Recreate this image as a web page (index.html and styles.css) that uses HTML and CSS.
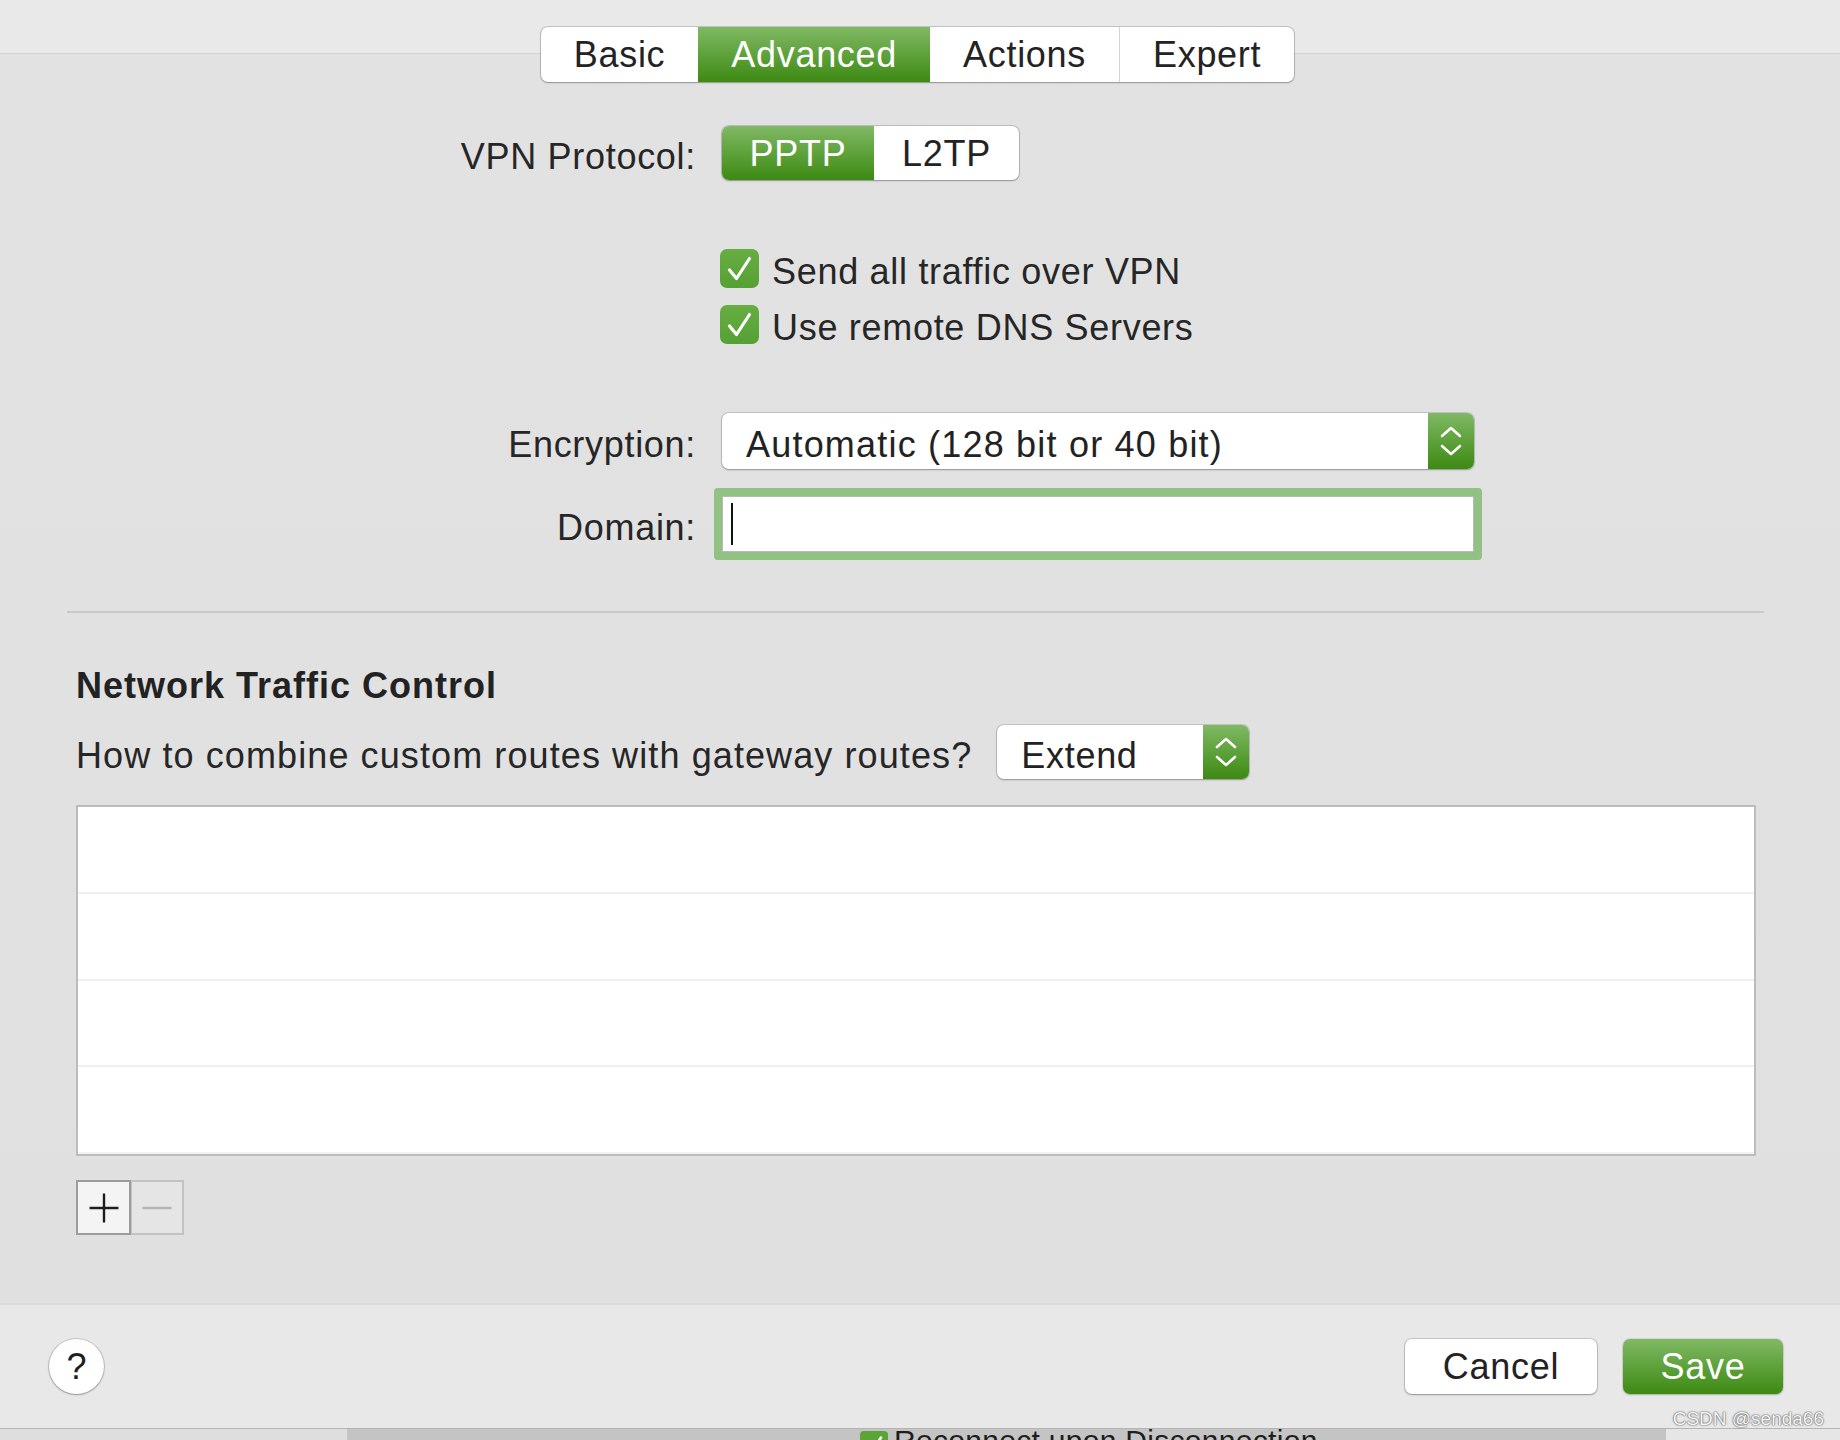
FILE: index.html
```html
<!DOCTYPE html>
<html>
<head>
<meta charset="utf-8">
<title>VPN Advanced</title>
<link rel="stylesheet" href="styles.css">
</head>
<body>
<div class="dialog">
  <main class="content">
    <div class="tabbar">
      <div class="seg tabs">
        <span class="seg-item">Basic</span>
        <span class="seg-item active">Advanced</span>
        <span class="seg-item">Actions</span>
        <span class="seg-item sep">Expert</span>
      </div>
    </div>

    <div class="row protocol">
      <span class="lbl">VPN Protocol:</span>
      <div class="seg proto">
        <span class="seg-item active">PPTP</span>
        <span class="seg-item">L2TP</span>
      </div>
    </div>

    <div class="row checks">
      <span class="lbl"></span>
      <div class="check-list">
        <div class="check">
          <span class="box"><svg width="39" height="39" viewBox="0 0 39 39"><path d="M9.5 21 L16.5 29.5 L29.5 9.5" fill="none" stroke="#fff" stroke-width="3.2" stroke-linecap="round" stroke-linejoin="round"/></svg></span>
          <span class="check-text">Send all traffic over VPN</span>
        </div>
        <div class="check">
          <span class="box"><svg width="39" height="39" viewBox="0 0 39 39"><path d="M9.5 21 L16.5 29.5 L29.5 9.5" fill="none" stroke="#fff" stroke-width="3.2" stroke-linecap="round" stroke-linejoin="round"/></svg></span>
          <span class="check-text">Use remote DNS Servers</span>
        </div>
      </div>
    </div>

    <div class="row enc">
      <span class="lbl">Encryption:</span>
      <div class="popup popup-enc">
        <span class="popup-text">Automatic (128 bit or 40 bit)</span>
        <span class="stepper"><svg width="46" height="56" viewBox="0 0 46 56"><path d="M14 23 L23 15 L32 23 M14 33 L23 41 L32 33" fill="none" stroke="#fff" stroke-width="2.6" stroke-linecap="round" stroke-linejoin="round"/></svg></span>
      </div>
    </div>

    <div class="row domain">
      <span class="lbl">Domain:</span>
      <div class="field"><span class="caret"></span></div>
    </div>

    <div class="divider"></div>

    <section class="ntc">
      <h2 class="ntc-title">Network Traffic Control</h2>
      <div class="combine">
        <span class="combine-text">How to combine custom routes with gateway routes?</span>
        <div class="popup popup-ext">
          <span class="popup-text">Extend</span>
          <span class="stepper"><svg width="46" height="54" viewBox="0 0 46 54"><path d="M14 22 L23 14 L32 22 M14 32 L23 40 L32 32" fill="none" stroke="#fff" stroke-width="2.6" stroke-linecap="round" stroke-linejoin="round"/></svg></span>
        </div>
      </div>
      <div class="routes">
        <div class="route-row"></div>
        <div class="route-row"></div>
        <div class="route-row"></div>
        <div class="route-row"></div>
      </div>
      <div class="addrem">
        <span class="ar-btn add"><svg width="32" height="32" viewBox="0 0 32 32"><path d="M16 1.5 V30.5 M1.5 16 H30.5" stroke="#1e1e1e" stroke-width="2.4" fill="none"/></svg></span>
        <span class="ar-btn remove"><svg width="32" height="32" viewBox="0 0 32 32"><path d="M1.5 16 H30.5" stroke="#b4b4b4" stroke-width="2.4" fill="none"/></svg></span>
      </div>
    </section>
  </main>

  <footer class="footer">
    <span class="help">?</span>
    <div class="actions">
      <span class="btn cancel">Cancel</span>
      <span class="btn save">Save</span>
    </div>
  </footer>

  <div class="behind">
    <div class="behind-left"></div>
    <div class="behind-mid">
      <span class="mini-box"><svg width="28" height="28" viewBox="0 0 28 28"><path d="M6.5 15 L11.5 21 L21 6.5" fill="none" stroke="#fff" stroke-width="2.6" stroke-linecap="round" stroke-linejoin="round"/></svg></span>
      <span class="behind-text">Reconnect upon Disconnection</span>
    </div>
    <div class="behind-right"></div>
  </div>

  <div class="watermark">CSDN @senda66</div>
</div>
</body>
</html>
```

FILE: styles.css
```css
* { box-sizing: border-box; }

html, body {
  margin: 0;
  padding: 0;
}

body {
  width: 1840px;
  height: 1440px;
  overflow: hidden;
  font-family: "Liberation Sans", Arial, sans-serif;
  font-size: 36px;
  letter-spacing: 0.7px;
  color: #262626;
}

.dialog {
  position: relative;
  width: 1840px;
  height: 1440px;
  display: flex;
  flex-direction: column;
}

.content {
  flex: 1;
  overflow: hidden;
  background: linear-gradient(#e9e9e9 0, #e9e9e9 53px, #d2d2d2 53px, #d2d2d2 54px, #e2e2e2 54px, #e0e0e0 100%);
}

/* segmented controls */
.tabbar {
  padding-top: 27px;
  padding-right: 5px;
  display: flex;
  justify-content: center;
}

.seg {
  display: inline-flex;
  background: #fff;
  border-radius: 7px;
  box-shadow: 0 0 0 1px rgba(0, 0, 0, 0.16), 0 1px 2px rgba(0, 0, 0, 0.22);
  overflow: hidden;
}

.tabs { height: 55px; }

.seg-item {
  display: flex;
  align-items: center;
  justify-content: center;
  padding: 0 33px;
  color: #232323;
}

.seg-item.sep { border-left: 1px solid #d4d4d4; }

.seg-item.active {
  color: #fff;
  background: linear-gradient(#80b964, #3d8a13);
}

.proto { height: 54px; }
.proto .seg-item { padding: 2px 20px 0; }
.proto .seg-item:first-child { width: 152px; }
.proto .seg-item:last-child { width: 145px; }

/* form rows */
.row {
  display: flex;
  align-items: center;
}

.lbl {
  width: 696px;
  margin-right: 26px;
  padding-top: 7px;
  text-align: right;
  flex: none;
}

.protocol { margin-top: 44px; }

.checks { margin-top: 69px; align-items: flex-start; }

.check-list {
  display: flex;
  flex-direction: column;
  gap: 17px;
  margin-left: -2px;
}

.check {
  display: flex;
  align-items: center;
  height: 39px;
}

.check-text { padding-top: 7px; }

.box {
  width: 39px;
  height: 39px;
  border-radius: 7px;
  background: linear-gradient(#66ad42, #56a133);
  margin-right: 13px;
  flex: none;
  display: block;
}

.box svg { display: block; }

.enc { margin-top: 69px; }

.popup {
  display: flex;
  align-items: center;
  background: #fff;
  border-radius: 7px;
  box-shadow: 0 0 0 1px rgba(0, 0, 0, 0.13), 0 1px 2px rgba(0, 0, 0, 0.25);
  overflow: hidden;
}

.popup-text {
  flex: 1;
  padding-left: 24px;
  padding-top: 7px;
  color: #222;
}

.popup-enc .popup-text { letter-spacing: 1.2px; }

.stepper {
  width: 46px;
  align-self: stretch;
  background: linear-gradient(#80b964, #3d8a13);
  display: flex;
  align-items: center;
  justify-content: center;
}

.stepper svg { display: block; }

.popup-enc {
  width: 752px;
  height: 56px;
}

.domain { margin-top: 27px; }

.field {
  width: 752px;
  height: 56px;
  background: #fff;
  border: 1px solid #b9b9b9;
  border-radius: 1px;
  box-shadow: 0 0 0 8px #92c283;
  display: flex;
  align-items: center;
  padding-left: 8px;
}

.caret {
  width: 2px;
  height: 42px;
  background: #111;
}

.divider {
  height: 2px;
  background: #c9c9c9;
  margin: 59px 76px 0 67px;
}

/* network traffic control */
.ntc {
  padding: 0 84px 0 76px;
}

.ntc-title {
  margin: 51px 0 0;
  padding-top: 2px;
  font-size: 36px;
  line-height: 40px;
  font-weight: bold;
  letter-spacing: 1px;
  color: #222;
}

.combine {
  margin-top: 19px;
  display: flex;
  align-items: center;
}

.combine-text {
  letter-spacing: 1.1px;
  margin-right: 25px;
  padding-top: 7px;
}

.popup-ext {
  width: 252px;
  height: 54px;
}

.routes {
  margin-top: 26px;
  height: 351px;
  background: #fff;
  border: 2px solid #bcbcbc;
  display: flex;
  flex-direction: column;
}

.route-row {
  flex: 1;
  border-bottom: 2px solid #efefef;
}

.route-row:last-child { border-bottom-color: #f3f3f3; }

.addrem {
  margin-top: 24px;
  display: flex;
  height: 55px;
}

.ar-btn {
  width: 55px;
  height: 55px;
  display: flex;
  align-items: center;
  justify-content: center;
}

.ar-btn.add {
  background: #f4f4f4;
  border: 2px solid #9c9c9c;
  position: relative;
  z-index: 1;
}

.ar-btn.remove {
  width: 54px;
  margin-left: -1px;
  background: #e5e5e5;
  border: 2px solid #c3c3c3;
}

/* footer */
.footer {
  height: 126px;
  flex: none;
  background: #e8e8e8;
  border-top: 2px solid #dbdbdb;
  border-bottom: 1px solid #b4b4b4;
  display: flex;
  align-items: center;
  justify-content: space-between;
  padding: 0 57px 0 49px;
}

.help {
  width: 55px;
  height: 55px;
  border-radius: 50%;
  background: #fff;
  box-shadow: 0 0 0 1px rgba(0, 0, 0, 0.14), 0 1px 2px rgba(0, 0, 0, 0.25);
  display: flex;
  align-items: center;
  justify-content: center;
  font-size: 36px;
  letter-spacing: 0;
  color: #1e1e1e;
}

.actions {
  display: flex;
  gap: 26px;
}

.btn {
  height: 55px;
  border-radius: 7px;
  display: flex;
  align-items: center;
  justify-content: center;
}

.cancel {
  width: 192px;
  background: #fff;
  box-shadow: 0 0 0 1px rgba(0, 0, 0, 0.14), 0 1px 2px rgba(0, 0, 0, 0.25);
  color: #222;
}

.save {
  width: 160px;
  background: linear-gradient(#80b964, #3d8a13);
  box-shadow: 0 0 0 1px rgba(0, 0, 0, 0.08), 0 1px 2px rgba(0, 0, 0, 0.2);
  color: #fff;
}

/* window behind the sheet */
.behind {
  height: 11px;
  flex: none;
  display: flex;
  overflow: hidden;
}

.behind-left { width: 347px; background: #dedede; }
.behind-right { flex: 1; background: #e6e6e6; }

.behind-mid {
  width: 1319px;
  background: #c4c4c4;
  display: flex;
  align-items: flex-start;
  padding-left: 513px;
}

.mini-box {
  width: 28px;
  height: 28px;
  margin-top: 2px;
  border-radius: 4px;
  background: #5aa535;
  flex: none;
  display: block;
}

.mini-box svg { display: block; }

.behind-text {
  margin-left: 6px;
  font-size: 30px;
  line-height: 30px;
  letter-spacing: 0.3px;
  color: #1e1e1e;
  margin-top: -3px;
}

.watermark {
  position: absolute;
  right: 16px;
  top: 1408px;
  font-size: 19px;
  letter-spacing: 0;
  color: #f6f6f6;
  text-shadow: 0 0 2px #555, 0 0 1px #555;
}
```
